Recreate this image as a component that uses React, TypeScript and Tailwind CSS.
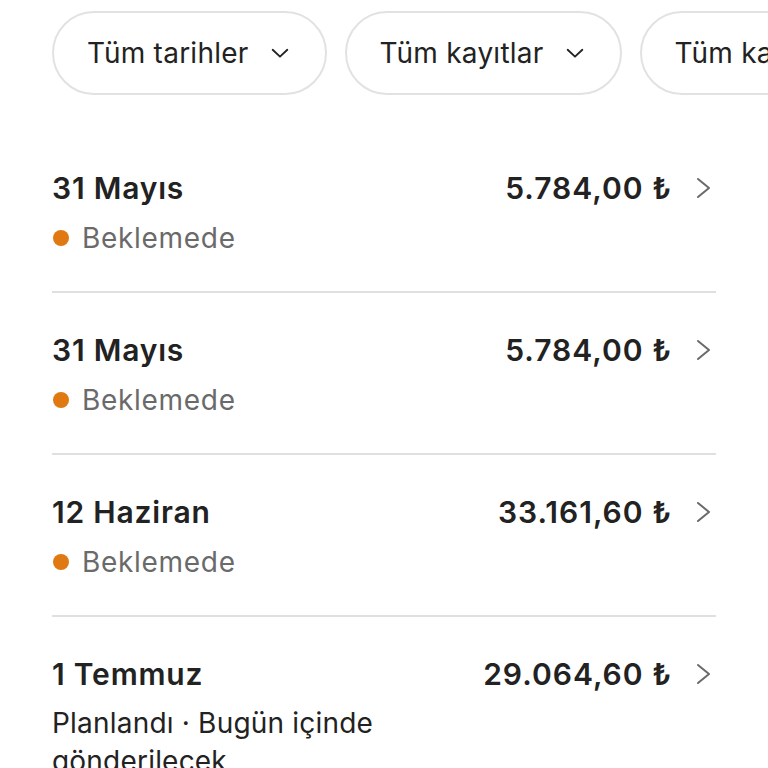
import React from "react";

const Chevron = () => (
  <svg width="22" height="22" viewBox="0 0 24 24" fill="none" stroke="#222222" strokeWidth="2" strokeLinecap="round" strokeLinejoin="round">
    <path d="M4 8.5l8 7.5 8-7.5" />
  </svg>
);

const ChevronRight = () => (
  <svg width="16" height="26" viewBox="0 0 16 26" fill="none" stroke="#6a6a6a" strokeWidth="2" strokeLinecap="round" strokeLinejoin="round">
    <path d="M2 4l11 9-11 9" />
  </svg>
);

type Row = { date: string; amount: string; status: string; pending: boolean };

const rows: Row[] = [
  { date: "31 Mayıs", amount: "5.784,00 ₺", status: "Beklemede", pending: true },
  { date: "31 Mayıs", amount: "5.784,00 ₺", status: "Beklemede", pending: true },
  { date: "12 Haziran", amount: "33.161,60 ₺", status: "Beklemede", pending: true },
  { date: "1 Temmuz", amount: "29.064,60 ₺", status: "Planlandı · Bugün içinde gönderilecek", pending: false },
];

export default function App() {
  return (
    <div className="w-[768px] h-[768px] overflow-hidden bg-white text-[#222222]" style={{ fontFamily: "Inter, 'Noto Sans', sans-serif" }}>
      <div className="flex gap-[18px] pl-[52px] pt-[11px] whitespace-nowrap">
        {["Tüm tarihler", "Tüm kayıtlar", "Tüm kayıtlar"].map((t, i) => (
          <div key={i} className="shrink-0 h-[84px] rounded-full border-2 border-[#e2e2e2] flex items-center pl-[33px] pr-[34px] gap-[20px] text-[28px] tracking-[0.25px]">
            <span>{t}</span>
            <Chevron />
          </div>
        ))}
      </div>
      <div className="px-[52px] mt-[73px]">
        {rows.map((r, i) => (
          <div key={i} className={i > 0 ? "border-t-2 border-[#e0e0e0] pt-[37px] pb-[33px]" : "pb-[33px]"}>
            <div className="flex justify-between items-start">
              <div className="w-[400px]">
                <div className="text-[30px] font-semibold leading-[40px] tracking-[0.8px]">{r.date}</div>
                <div className="mt-[10px] flex items-start">
                  {r.pending && <span className="mt-[12px] mr-[13px] ml-[1px] w-[16px] h-[16px] rounded-full bg-[#e07912] shrink-0" />}
                  <span className={r.pending ? "text-[28px] leading-[40px] text-[#6a6a6a] tracking-[0.7px]" : "text-[28px] leading-[38px] text-[#222222] tracking-[0.2px]"}>{r.status}</span>
                </div>
              </div>
              <div className="flex items-center h-[40px] gap-[24px] pr-[4px]">
                <span className="text-[30px] font-semibold tracking-[1px]">{r.amount}</span>
                <ChevronRight />
              </div>
            </div>
          </div>
        ))}
      </div>
    </div>
  );
}
